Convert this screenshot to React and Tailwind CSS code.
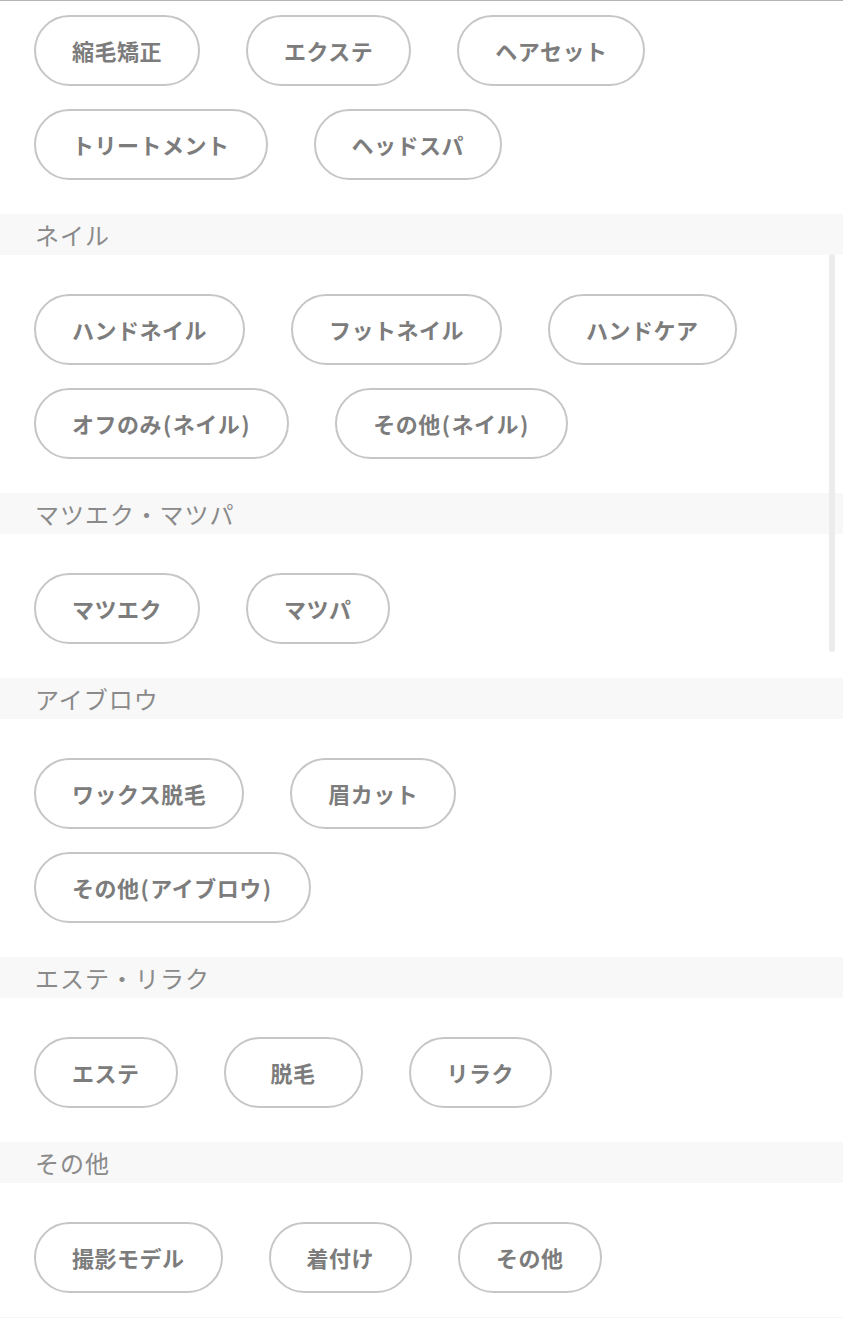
import React from "react";

const sections = [
  { title: null, items: ["縮毛矯正", "エクステ", "ヘアセット", "トリートメント", "ヘッドスパ"] },
  { title: "ネイル", items: ["ハンドネイル", "フットネイル", "ハンドケア", "オフのみ(ネイル)", "その他(ネイル)"] },
  { title: "マツエク・マツパ", items: ["マツエク", "マツパ"] },
  { title: "アイブロウ", items: ["ワックス脱毛", "眉カット", "その他(アイブロウ)"] },
  { title: "エステ・リラク", items: ["エステ", "脱毛", "リラク"] },
  { title: "その他", items: ["撮影モデル", "着付け", "その他"] },
];

function Label({ text }) {
  const parts = text.split(/([()])/);
  return (
    <>
      {parts.map((p, i) =>
        p === "(" || p === ")" ? (
          <span key={i} className="mx-[1px]">
            {p}
          </span>
        ) : (
          <span key={i}>{p}</span>
        )
      )}
    </>
  );
}

export default function App() {
  return (
    <div
      className="relative w-[843px] h-[1322px] overflow-hidden bg-white border-t border-[#b4b4b4]"
      style={{ fontFamily: '"Noto Sans CJK JP", "Noto Sans", sans-serif' }}
    >
      {sections.map((s, i) => (
        <div key={i}>
          {s.title && (
            <div className="h-[41px] bg-[#f8f8f8] pl-[35px] flex items-center text-[24px] tracking-[1px] text-[#8a8a8a] leading-none">
              {s.title}
            </div>
          )}
          <div
            className={`flex flex-wrap gap-y-[23px] px-[34px] pb-[34px] ${
              s.title ? "pt-[39px]" : "pt-[14px]"
            }`}
          >
            {s.items.map((it) => (
              <div
                key={it}
                className="h-[71px] min-w-[139px] mr-[46px] px-[36px] flex items-center justify-center rounded-full border-2 border-[#c6c6c6] text-[22px] tracking-[0.5px] font-bold text-[#7c7c7c] leading-none pb-[2px]"
              >
                <Label text={it} />
              </div>
            ))}
          </div>
        </div>
      ))}
      <div className="absolute left-[829px] top-[253px] w-[6px] h-[398px] rounded-full bg-[#ececec]" />
      <div className="absolute left-0 right-0 top-[1316px] h-px bg-[#f6f6f6]" />
    </div>
  );
}
